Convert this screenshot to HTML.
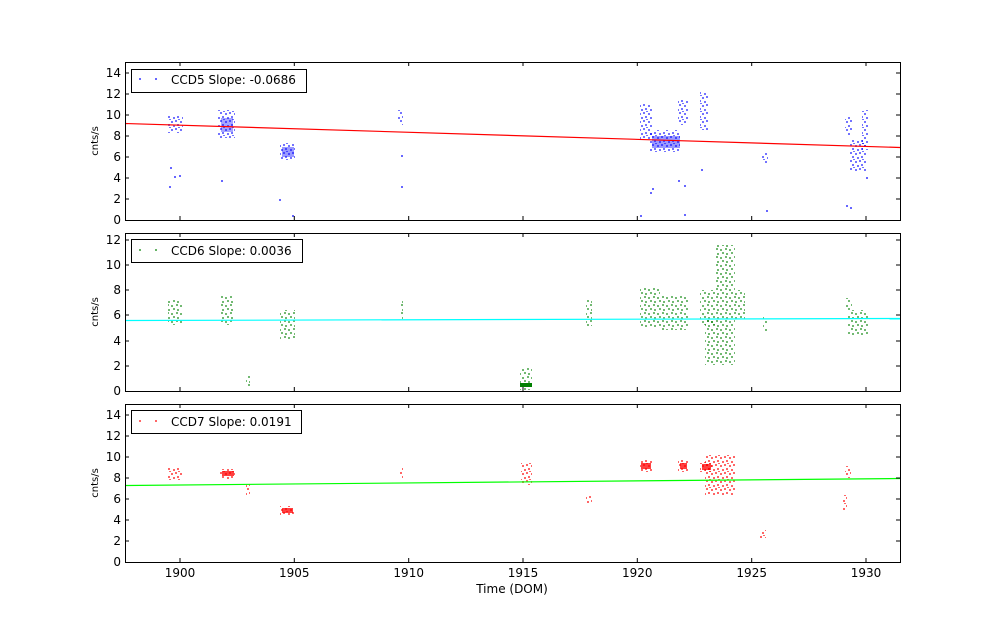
<!DOCTYPE html>
<html><head><meta charset="utf-8"><style>
html,body{margin:0;padding:0;background:#fff;width:1000px;height:624px;overflow:hidden}
svg{display:block}
text{font-family:"DejaVu Sans","Liberation Sans",sans-serif;fill:#000}
</style></head><body>
<svg width="1000" height="624" viewBox="0 0 1000 624">
<defs>
<pattern id="pb" width="9" height="8" patternUnits="userSpaceOnUse">
<g fill="#0000ff" fill-opacity="0.55"><rect x="0" y="1" width="2" height="2"/><rect x="4" y="0" width="2" height="2"/><rect x="6" y="4" width="2" height="2"/><rect x="2" y="5" width="2" height="2"/><rect x="7" y="7" width="2" height="1"/></g></pattern>
<pattern id="pg" width="9" height="8" patternUnits="userSpaceOnUse">
<g fill="#008000" fill-opacity="0.55"><rect x="0" y="1" width="2" height="2"/><rect x="5" y="0" width="2" height="2"/><rect x="6" y="5" width="2" height="2"/><rect x="2" y="4" width="2" height="2"/></g></pattern>
<pattern id="pr" width="9" height="8" patternUnits="userSpaceOnUse">
<g fill="#ff0000" fill-opacity="0.6"><rect x="0" y="1" width="2" height="2"/><rect x="4" y="0" width="2" height="2"/><rect x="6" y="4" width="2" height="2"/><rect x="2" y="5" width="2" height="2"/><rect x="7" y="7" width="2" height="1"/></g></pattern>
</defs>

<!-- Panel 1 -->
<g fill="url(#pb)">
<rect x="168" y="115" width="15" height="18"/><rect x="218" y="110" width="17" height="28"/><rect x="221" y="118" width="12" height="14" fill="#0000ff" fill-opacity="0.35"/>
<rect x="280" y="143" width="15" height="17"/><rect x="282" y="147" width="12" height="10" fill="#0000ff" fill-opacity="0.4"/>
<rect x="398" y="110" width="5" height="15"/>
<rect x="640" y="104" width="12" height="36"/><rect x="650" y="130" width="30" height="22"/><rect x="652" y="136" width="28" height="12" fill="#0000ff" fill-opacity="0.4"/>
<rect x="678" y="100" width="10" height="25"/><rect x="700" y="92" width="8" height="38"/>
<rect x="762" y="153" width="6" height="10"/>
<rect x="845" y="117" width="7" height="18"/><rect x="850" y="140" width="16" height="32"/><rect x="862" y="110" width="6" height="40"/>
</g>
<g fill="#0000ff" fill-opacity="0.6">
<rect x="170" y="167" width="2" height="2"/><rect x="174" y="176" width="2" height="2"/><rect x="179" y="175" width="2" height="2"/><rect x="169" y="186" width="2" height="2"/>
<rect x="221" y="180" width="2" height="2"/><rect x="279" y="199" width="2" height="2"/><rect x="292" y="215" width="2" height="2"/>
<rect x="401" y="155" width="2" height="2"/><rect x="401" y="186" width="2" height="2"/><rect x="650" y="192" width="2" height="2"/><rect x="652" y="188" width="2" height="2"/>
<rect x="678" y="180" width="2" height="2"/><rect x="684" y="185" width="2" height="2"/><rect x="684" y="214" width="2" height="2"/><rect x="701" y="169" width="2" height="2"/>
<rect x="766" y="210" width="2" height="2"/><rect x="846" y="205" width="2" height="2"/><rect x="850" y="207" width="2" height="2"/><rect x="866" y="177" width="2" height="2"/><rect x="640" y="215" width="2" height="2"/>
</g>
<line x1="125" y1="123.5" x2="900" y2="147.5" stroke="#ff0000" stroke-width="1.2"/>
<rect x="125.5" y="62.5" width="775" height="158" fill="none" stroke="#000" stroke-width="1"/>
<rect x="131.5" y="69.5" width="175" height="23" fill="#fff" stroke="#000"/>
<rect x="139" y="78" width="2" height="2" fill="#0000ff" opacity=".6"/><rect x="155" y="78" width="2" height="2" fill="#0000ff" opacity=".6"/>
<text x="171" y="84" font-size="12">CCD5 Slope: -0.0686</text>

<!-- Panel 2 -->
<g fill="url(#pg)">
<rect x="168" y="300" width="14" height="25"/><rect x="220" y="295" width="14" height="30"/><rect x="280" y="310" width="15" height="30"/>
<rect x="246" y="375" width="4" height="13"/><rect x="400" y="300" width="3" height="20"/>
<rect x="520" y="368" width="12" height="22"/><rect x="520" y="383" width="12" height="4" fill="#008000"/>
<rect x="586" y="300" width="6" height="26"/>
<rect x="640" y="287" width="20" height="41"/><rect x="660" y="295" width="28" height="35"/>
<rect x="700" y="290" width="15" height="35"/><rect x="715" y="290" width="30" height="30"/><rect x="705" y="320" width="30" height="45"/><rect x="715" y="245" width="20" height="45"/>
<rect x="763" y="315" width="4" height="18"/><rect x="845" y="298" width="7" height="12"/><rect x="848" y="310" width="20" height="25"/>
</g>
<line x1="125" y1="320.5" x2="900" y2="318.5" stroke="#00ffff" stroke-width="1.2"/>
<rect x="125.5" y="233.5" width="775" height="158" fill="none" stroke="#000"/>
<rect x="131.5" y="239.5" width="171" height="23" fill="#fff" stroke="#000"/>
<rect x="139" y="249" width="2" height="2" fill="#008000" opacity=".6"/><rect x="155" y="249" width="2" height="2" fill="#008000" opacity=".6"/>
<text x="171" y="255" font-size="12">CCD6 Slope: 0.0036</text>

<!-- Panel 3 -->
<g fill="url(#pr)">
<rect x="168" y="468" width="14" height="12"/><rect x="220" y="469" width="15" height="10"/><rect x="280" y="506" width="14" height="9"/>
<rect x="246" y="484" width="4" height="12"/><rect x="400" y="467" width="3" height="11"/><rect x="521" y="463" width="11" height="22"/>
<rect x="586" y="495" width="6" height="8"/><rect x="640" y="460" width="12" height="12"/><rect x="678" y="460" width="10" height="12"/>
<rect x="700" y="462" width="12" height="10"/><rect x="705" y="455" width="30" height="40"/><rect x="760" y="530" width="6" height="8"/>
<rect x="845" y="466" width="6" height="12"/><rect x="843" y="495" width="4" height="15"/>
</g>
<g fill="#ff0000" fill-opacity="0.75"><rect x="641" y="463" width="10" height="6"/><rect x="680" y="463" width="7" height="6"/><rect x="282" y="508" width="11" height="5"/><rect x="702" y="464" width="9" height="6"/><rect x="222" y="471" width="12" height="5"/></g>
<line x1="125" y1="485.5" x2="900" y2="478.5" stroke="#00ff00" stroke-width="1.2"/>
<rect x="125.5" y="404.5" width="775" height="158" fill="none" stroke="#000"/>
<rect x="131.5" y="410.5" width="170" height="23" fill="#fff" stroke="#000"/>
<rect x="139" y="420" width="2" height="2" fill="#ff0000" opacity=".6"/><rect x="155" y="420" width="2" height="2" fill="#ff0000" opacity=".6"/>
<text x="171" y="426" font-size="12">CCD7 Slope: 0.0191</text>

<!-- ticks -->
<g stroke="#000" stroke-width="1">
<path d="M180,62v4M294.3,62v4M408.7,62v4M523,62v4M637.3,62v4M751.7,62v4M866,62v4 M180,220v-4M294.3,220v-4M408.7,220v-4M523,220v-4M637.3,220v-4M751.7,220v-4M866,220v-4"/>
<path d="M180,233v4M294.3,233v4M408.7,233v4M523,233v4M637.3,233v4M751.7,233v4M866,233v4 M180,391v-4M294.3,391v-4M408.7,391v-4M523,391v-4M637.3,391v-4M751.7,391v-4M866,391v-4"/>
<path d="M180,404v4M294.3,404v4M408.7,404v4M523,404v4M637.3,404v4M751.7,404v4M866,404v4 M180,562v-4M294.3,562v-4M408.7,562v-4M523,562v-4M637.3,562v-4M751.7,562v-4M866,562v-4"/>
<path d="M125,199h4M125,178h4M125,157h4M125,136h4M125,115h4M125,94h4M125,73h4 M900,199h-4M900,178h-4M900,157h-4M900,136h-4M900,115h-4M900,94h-4M900,73h-4"/>
<path d="M125,366h4M125,341h4M125,315h4M125,290h4M125,265h4M125,240h4 M900,366h-4M900,341h-4M900,315h-4M900,290h-4M900,265h-4M900,240h-4"/>
<path d="M125,541h4M125,520h4M125,499h4M125,478h4M125,457h4M125,436h4M125,415h4 M900,541h-4M900,520h-4M900,499h-4M900,478h-4M900,457h-4M900,436h-4M900,415h-4"/>
</g>
<g font-size="12" text-anchor="end">
<text x="121" y="224">0</text><text x="121" y="203">2</text><text x="121" y="182">4</text><text x="121" y="161">6</text><text x="121" y="140">8</text><text x="121" y="119">10</text><text x="121" y="98">12</text><text x="121" y="77">14</text>
<text x="121" y="395">0</text><text x="121" y="370">2</text><text x="121" y="345">4</text><text x="121" y="319">6</text><text x="121" y="294">8</text><text x="121" y="269">10</text><text x="121" y="244">12</text>
<text x="121" y="566">0</text><text x="121" y="545">2</text><text x="121" y="524">4</text><text x="121" y="503">6</text><text x="121" y="482">8</text><text x="121" y="461">10</text><text x="121" y="440">12</text><text x="121" y="419">14</text>
</g>
<g font-size="12" text-anchor="middle">
<text x="180" y="577">1900</text><text x="294.3" y="577">1905</text><text x="408.7" y="577">1910</text><text x="523" y="577">1915</text><text x="637.3" y="577">1920</text><text x="751.7" y="577">1925</text><text x="866" y="577">1930</text>
<text x="512" y="593">Time (DOM)</text>
</g>
<g font-size="10" text-anchor="middle">
<text transform="translate(98,141) rotate(-90)">cnts/s</text>
<text transform="translate(98,312) rotate(-90)">cnts/s</text>
<text transform="translate(98,483) rotate(-90)">cnts/s</text>
</g>
</svg>
</body></html>
